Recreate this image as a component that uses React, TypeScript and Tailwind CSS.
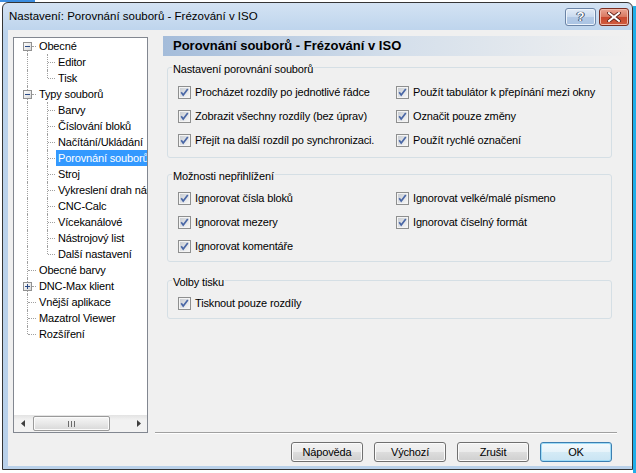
import React from "react";

type Row = {
  level: 0 | 1;
  text: string;
  box?: "minus" | "plus";
  first?: boolean;
  last?: boolean;
  lastChild?: boolean;
  selected?: boolean;
};

const rows: Row[] = [
  { level: 0, text: "Obecné", box: "minus", first: true },
  { level: 1, text: "Editor" },
  { level: 1, text: "Tisk", lastChild: true },
  { level: 0, text: "Typy souborů", box: "minus" },
  { level: 1, text: "Barvy" },
  { level: 1, text: "Číslování bloků" },
  { level: 1, text: "Načítání/Ukládání" },
  { level: 1, text: "Porovnání souborů", selected: true },
  { level: 1, text: "Stroj" },
  { level: 1, text: "Vykreslení drah nástroje" },
  { level: 1, text: "CNC-Calc" },
  { level: 1, text: "Vícekanálové" },
  { level: 1, text: "Nástrojový list" },
  { level: 1, text: "Další nastavení", lastChild: true },
  { level: 0, text: "Obecné barvy" },
  { level: 0, text: "DNC-Max klient", box: "plus" },
  { level: 0, text: "Vnější aplikace" },
  { level: 0, text: "Mazatrol Viewer" },
  { level: 0, text: "Rozšíření", last: true },
];

function ExpandBox({ kind }: { kind: "minus" | "plus" }) {
  return (
    <svg width="9" height="9" viewBox="0 0 9 9" className="absolute left-[9px] top-[4px]">
      <defs>
        <linearGradient id="eb" x1="0" y1="0" x2="1" y2="1">
          <stop offset="0" stopColor="#ffffff" />
          <stop offset="1" stopColor="#d6d6d6" />
        </linearGradient>
      </defs>
      <rect x="0.5" y="0.5" width="8" height="8" fill="url(#eb)" stroke="#919191" />
      <rect x="2" y="4" width="5" height="1" fill="#2a4a86" />
      {kind === "plus" && <rect x="4" y="2" width="1" height="5" fill="#2a4a86" />}
    </svg>
  );
}

function TreeRow({ r }: { r: Row }) {
  return (
    <div className="flex h-[16px] shrink-0 items-center">
      <div className="relative h-[16px] w-[23px] shrink-0">
        {r.level === 0 ? (
          <>
            {r.first ? (
              <div className="absolute left-[13px] top-[8px] h-[8px] w-0 border-l border-dotted border-[#a0a0a0]" />
            ) : r.last ? (
              <div className="absolute left-[13px] top-0 h-[8px] w-0 border-l border-dotted border-[#a0a0a0]" />
            ) : (
              <div className="absolute left-[13px] top-0 h-[16px] w-0 border-l border-dotted border-[#a0a0a0]" />
            )}
            {r.box ? (
              <div className="absolute left-[18px] top-[8px] h-0 w-[4px] border-t border-dotted border-[#a0a0a0]" />
            ) : (
              <div className="absolute left-[14px] top-[8px] h-0 w-[8px] border-t border-dotted border-[#a0a0a0]" />
            )}
            {r.box && <ExpandBox kind={r.box} />}
          </>
        ) : (
          <div className="absolute left-[13px] top-0 h-[16px] w-0 border-l border-dotted border-[#a0a0a0]" />
        )}
      </div>
      {r.level === 1 && (
        <div className="relative h-[16px] w-[19px] shrink-0">
          <div
            className={`absolute left-[10px] top-0 w-0 border-l border-dotted border-[#a0a0a0] ${
              r.lastChild ? "h-[8px]" : "h-[16px]"
            }`}
          />
          <div className="absolute left-[11px] top-[8px] h-0 w-[7px] border-t border-dotted border-[#a0a0a0]" />
        </div>
      )}
      <span
        className={`h-[16px] whitespace-nowrap px-[2px] leading-[16px] ${
          r.selected ? "bg-[#3399ff] text-white" : "text-black"
        }`}
      >
        {r.text}
      </span>
    </div>
  );
}

function Arrow({ dir }: { dir: "left" | "right" }) {
  return (
    <svg width="4" height="7" viewBox="0 0 4 7">
      {dir === "left" ? <path d="M4 0 L0 3.5 L4 7 Z" fill="#3f3f3f" /> : <path d="M0 0 L4 3.5 L0 7 Z" fill="#3f3f3f" />}
    </svg>
  );
}

function Scrollbar() {
  return (
    <div className="flex h-[17px] shrink-0 items-center bg-[linear-gradient(#e3e3e3,#f2f2f2_30%,#f2f2f2)]">
      <div className="flex h-[17px] w-[17px] shrink-0 items-center justify-center">
        <Arrow dir="left" />
      </div>
      <div className="ml-[2px] flex h-[15px] w-[77px] items-center justify-center gap-[2px] rounded-[2px] border border-[#9a9a9a] bg-[linear-gradient(#f6f6f6,#e8e8e8_50%,#d8d8d8)] shadow-[inset_0_0_0_1px_#fbfbfb]">
        <div className="h-[6px] w-[1px] bg-[#6b6b6b]" />
        <div className="h-[6px] w-[1px] bg-[#6b6b6b]" />
        <div className="h-[6px] w-[1px] bg-[#6b6b6b]" />
      </div>
      <div className="flex-1" />
      <div className="flex h-[17px] w-[17px] shrink-0 items-center justify-center">
        <Arrow dir="right" />
      </div>
    </div>
  );
}

function Check() {
  return (
    <svg width="13" height="13" viewBox="0 0 13 13" className="shrink-0">
      <defs>
        <linearGradient id="cbg" x1="0" y1="0" x2="1" y2="1">
          <stop offset="0" stopColor="#c9cdd3" />
          <stop offset="1" stopColor="#f6f6f6" />
        </linearGradient>
      </defs>
      <rect x="0.5" y="0.5" width="12" height="12" fill="#f4f4f4" stroke="#8e8f8f" />
      <rect x="2" y="2" width="9" height="9" fill="url(#cbg)" />
      <path d="M3.2 6.2 L5.2 9 L9.8 3" stroke="#4a67a6" strokeWidth="1.7" fill="none" />
    </svg>
  );
}

function CheckItem({ text }: { text: string }) {
  return (
    <div className="flex h-[24px] items-center gap-[4px] whitespace-nowrap">
      <Check />
      <span>{text}</span>
    </div>
  );
}

function Group({
  label,
  className,
  children,
}: {
  label: string;
  className: string;
  children: React.ReactNode;
}) {
  return (
    <div className={`relative ml-[12px] mr-[20px] rounded-[3px] border border-[#d5dfe5] pl-[10px] ${className}`}>
      <span className="absolute left-[4px] top-[-6px] bg-[#f0f0f0] px-[1px] leading-[14px]">{label}</span>
      {children}
    </div>
  );
}

function Button({ text, def }: { text: string; def?: boolean }) {
  return (
    <div
      className={`flex h-[20px] w-[72px] items-center justify-center rounded-[3px] border ${
        def
          ? "border-[#3c7fb1] bg-[linear-gradient(#f4fafd,#e6f3fa_50%,#d5ebf6_50%,#c9e4f3)] shadow-[inset_0_0_0_1px_#9fdcf7]"
          : "border-[#707070] bg-[linear-gradient(#f2f2f2,#ebebeb_50%,#dddddd_50%,#cfcfcf)] shadow-[inset_0_0_0_1px_#fbfbfb]"
      }`}
    >
      {text}
    </div>
  );
}

export default function App() {
  return (
    <div className="relative h-[473px] w-[636px] overflow-hidden bg-white font-['Liberation_Sans',Arial,sans-serif] text-[11px] tracking-[-0.15px] text-black">
      <div className="absolute left-0 top-0 h-[2px] w-[35px] bg-[#3b8de0]" />
      <div className="absolute right-0 top-[6px] h-[467px] w-[3px] bg-[#20aee8]" />

      <div className="ml-[2px] mt-[2px] flex h-[468px] w-[631px] flex-col rounded-t-[6px] border border-[#353535] bg-[linear-gradient(#d3e2f3,#bcd3ec_30px,#b9d1ea)]">
        {/* Title bar */}
        <div className="flex h-[27px] shrink-0 items-start">
          <span className="ml-[6px] mt-[6px] text-[11.5px] leading-[15px] tracking-normal text-black">
            Nastavení: Porovnání souborů - Frézování v ISO
          </span>
          <div className="ml-auto mr-[3px] mt-[5px] flex gap-[3px]">
            <div className="flex h-[18px] w-[31px] items-center justify-center rounded-[3px] border border-[#6b84a6] bg-[linear-gradient(#e3ecf7,#c9daef_50%,#b4cae6_50%,#a9c3e3)] shadow-[inset_0_0_0_1px_#eef4fb]">
              <span className="text-[13px] font-bold leading-[14px] text-white [text-shadow:0_0_1px_#2c3e5a,0_0_1px_#2c3e5a,1px_0_0_#44587a,-1px_0_0_#44587a]">
                ?
              </span>
            </div>
            <div className="flex h-[18px] w-[30px] items-center justify-center rounded-[3px] border border-[#7b2e22] bg-[linear-gradient(#eaa493,#d9775f_50%,#c9472e_50%,#cf5c3f)] shadow-[inset_0_0_0_1px_#f1b9aa]">
              <svg width="14" height="10" viewBox="0 0 14 10">
                <path d="M2 1 L12 9 M12 1 L2 9" stroke="#5a1d14" strokeWidth="3.6" strokeLinecap="square" />
                <path d="M2 1 L12 9 M12 1 L2 9" stroke="#ffffff" strokeWidth="2" strokeLinecap="square" />
              </svg>
            </div>
          </div>
        </div>

        {/* Client area */}
        <div className="mb-[3px] ml-[5px] flex flex-1 bg-[#f0f0f0]">
          {/* Tree */}
          <div className="ml-[5px] mt-[7px] flex h-[396px] w-[135px] shrink-0 flex-col overflow-hidden border border-[#828790] bg-white">
            <div className="flex flex-1 flex-col overflow-hidden">
              {rows.map((r, i) => (
                <TreeRow key={i} r={r} />
              ))}
            </div>
            <Scrollbar />
          </div>

          {/* Right column */}
          <div className="ml-[7px] flex flex-1 flex-col">
            <div className="ml-[8px] mr-[3px] mt-[6px] flex h-[20px] items-center bg-linear-to-r from-[#a4bcda] via-[#d4dfeb] to-[#f0f0f0] pl-[10px]">
              <span className="text-[13px] font-bold tracking-normal">Porovnání souborů - Frézování v ISO</span>
            </div>

            <Group label="Nastavení porovnání souborů" className="mt-[11px] h-[91px] pt-[12px]">
              <div className="grid grid-cols-[218px_1fr]">
                <CheckItem text="Procházet rozdíly po jednotlivé řádce" />
                <CheckItem text="Použít tabulátor k přepínání mezi okny" />
                <CheckItem text="Zobrazit všechny rozdíly (bez úprav)" />
                <CheckItem text="Označit pouze změny" />
                <CheckItem text="Přejít na další rozdíl po synchronizaci." />
                <CheckItem text="Použít rychlé označení" />
              </div>
            </Group>

            <Group label="Možnosti nepřihlížení" className="mt-[16px] h-[88px] pt-[11px]">
              <div className="grid grid-cols-[218px_1fr]">
                <CheckItem text="Ignorovat čísla bloků" />
                <CheckItem text="Ignorovat velké/malé písmeno" />
                <CheckItem text="Ignorovat mezery" />
                <CheckItem text="Ignorovat číselný formát" />
                <CheckItem text="Ignorovat komentáře" />
              </div>
            </Group>

            <Group label="Volby tisku" className="mt-[18px] h-[39px] pt-[10px]">
              <CheckItem text="Tisknout pouze rozdíly" />
            </Group>

            <div className="flex-1" />
            <div className="mr-[15px] h-[2px] border-t border-b border-t-[#a0a0a0] border-b-white" />
            <div className="mb-[4px] mr-[20px] mt-[8px] flex justify-end gap-[11px]">
              <Button text="Nápověda" />
              <Button text="Výchozí" />
              <Button text="Zrušit" />
              <Button text="OK" def />
            </div>
          </div>
        </div>
      </div>
    </div>
  );
}
